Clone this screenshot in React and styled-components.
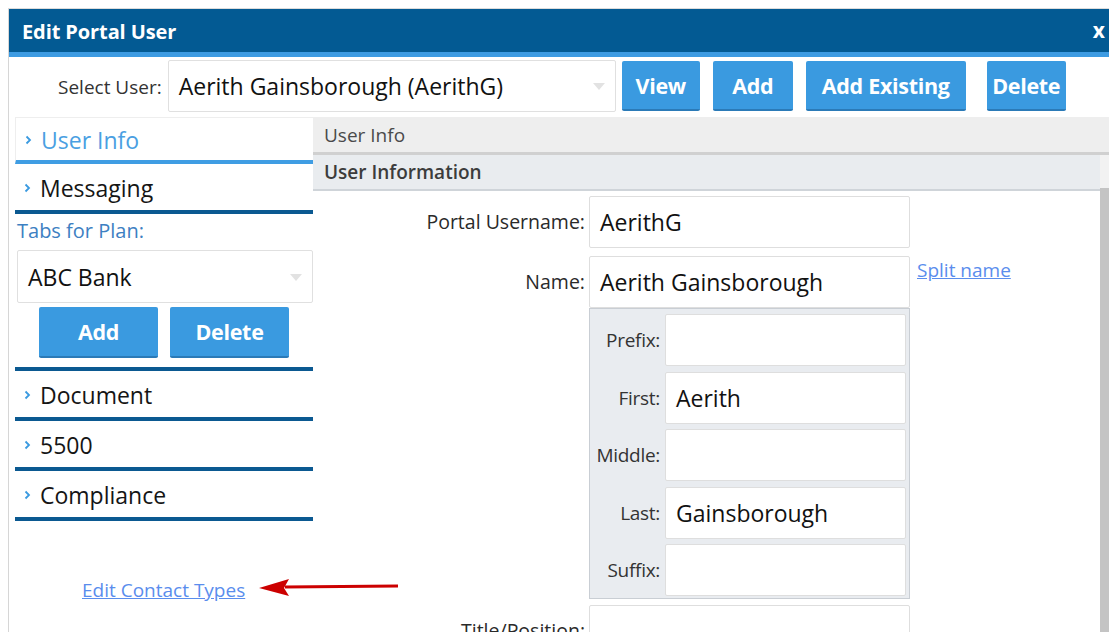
import React from 'react';
import styled, { createGlobalStyle } from 'styled-components';

const GlobalStyle = createGlobalStyle`
  html, body {
    margin: 0;
    padding: 0;
    background: #ffffff;
    overflow: hidden;
  }
  body {
    font-family: "Open Sans", "Noto Sans", Arial, sans-serif;
    color: #1a1a1a;
  }
`;

const Dialog = styled.div`
  margin: 8px 0 0 8px;
  height: calc(100vh - 8px);
  border-top: 1px solid #dcdcdc;
  border-left: 1px solid #d6d6d6;
  background: #fff;
  overflow: hidden;
  display: flex;
  flex-direction: column;
`;

const TitleBar = styled.div`
  height: 43px;
  flex: none;
  display: flex;
  align-items: center;
  justify-content: space-between;
  padding: 0 4px 0 13px;
  background: #035a93;
  border-bottom: 5px solid #3d9be2;
  color: #fff;
`;

const Title = styled.h2`
  margin: 0;
  font-size: 20px;
  font-weight: 700;
  letter-spacing: -0.1px;
  padding-top: 2px;
`;

const Close = styled.span`
  font-size: 21px;
  font-weight: 700;
  line-height: 1;
`;

const Toolbar = styled.div`
  height: 60px;
  flex: none;
  display: flex;
  align-items: flex-start;
  padding: 3px 0 0 49px;
  box-sizing: border-box;
`;

const FieldLabel = styled.label`
  font-size: 19px;
  color: #333;
  white-space: nowrap;
  align-self: center;
  margin-top: -3px;
`;

const SelectBox = styled.div`
  position: relative;
  width: ${(p) => p.$width}px;
  height: ${(p) => p.$height || 52}px;
  flex: none;
  box-sizing: border-box;
  border: 1px solid #e0e0e0;
  border-radius: 2px;
  background: #fff;
  display: flex;
  align-items: center;
  padding-left: 10px;
  font-size: 23px;
  color: #111;
  margin-left: ${(p) => p.$offset || 0}px;

  &::after {
    content: '';
    position: absolute;
    right: 10px;
    top: 50%;
    margin-top: -3px;
    border-left: 6px solid transparent;
    border-right: 6px solid transparent;
    border-top: 7px solid #e2e2e2;
  }
`;

const Button = styled.button`
  height: ${(p) => p.$height || 50}px;
  width: ${(p) => p.$width}px;
  flex: none;
  margin-left: ${(p) => p.$gap || 0}px;
  margin-top: 1px;
  padding: 0;
  border: none;
  border-bottom: 2px solid #2b7ab7;
  border-radius: 2px;
  background: #3a9ae0;
  color: #fff;
  font-family: inherit;
  font-size: 21.5px;
  font-weight: 700;
  letter-spacing: -0.3px;
  cursor: pointer;
`;

const Main = styled.div`
  flex: 1;
  display: flex;
  min-height: 0;
`;

const Sidebar = styled.aside`
  width: 298px;
  flex: none;
  margin-left: 6px;
  display: flex;
  flex-direction: column;
  position: relative;
  z-index: 1;
`;

/* sidebar section tab: active one is light blue, others black with a dark rule */
const Tab = styled.div`
  height: ${(p) => (p.$active ? 47 : 50)}px;
  flex: none;
  box-sizing: border-box;
  display: flex;
  align-items: center;
  gap: 9px;
  padding: 2px 0 0 9px;
  font-size: 23px;
  color: ${(p) => (p.$active ? '#4a9fe2' : '#151515')};
  border-bottom: 4px solid ${(p) => (p.$active ? '#3f9de3' : '#0b5991')};
  border-top: ${(p) => (p.$active ? '1px solid #eeeeee' : 'none')};
  border-left: ${(p) => (p.$active ? '1px solid #eeeeee' : 'none')};
`;

const Chevron = () => (
  <svg width="7" height="10" viewBox="0 0 7 10">
    <path d="M1.5 1.5 L5 5 L1.5 8.5" fill="none" stroke="#3a9ae0" strokeWidth="1.8" />
  </svg>
);

const PlanBlock = styled.div`
  display: flex;
  flex-direction: column;
  padding-top: 5px;
  border-bottom: 4px solid #0b5991;
  padding-bottom: 9px;
`;

const PlanLabel = styled.div`
  font-size: 20px;
  color: #3d80c2;
  padding-left: 2px;
  height: 31px;
  line-height: 23px;
`;

const PlanButtons = styled.div`
  display: flex;
  gap: 12px;
  padding-left: 24px;
  margin-top: 3px;
`;

const LinkRow = styled.div`
  display: flex;
  align-items: center;
  padding-left: 67px;
  margin-top: 56px;
`;

const Link = styled.a`
  font-size: 19px;
  color: #5a8ded;
  text-decoration: underline;
  cursor: pointer;
  white-space: nowrap;
`;

const Arrow = styled.svg`
  flex: none;
  margin-left: 14px;
  margin-top: -7px;
`;

const Content = styled.section`
  flex: 1;
  display: flex;
  flex-direction: column;
  min-width: 0;
`;

const SectionBar = styled.div`
  height: ${(p) => p.$height}px;
  flex: none;
  display: flex;
  align-items: center;
  padding-left: 11px;
  font-size: ${(p) => p.$size}px;
  font-weight: ${(p) => p.$weight || 400};
  color: ${(p) => p.$color};
  background: ${(p) => p.$bg};
  border-bottom: ${(p) => p.$line};
`;

const Scroller = styled.div`
  flex: 1;
  display: flex;
  min-height: 0;
`;

const ScrollBody = styled.div`
  flex: 1;
  display: flex;
  flex-direction: column;
`;

const ScrollTrack = styled.div`
  width: 9px;
  flex: none;
  background: #f2f2f2;
  display: flex;
  justify-content: flex-end;
  padding-top: 33px;
`;

const ScrollThumb = styled.div`
  width: 5px;
  flex: 1;
  background: #c4c4c4;
`;

const Form = styled.div`
  display: flex;
  flex-direction: column;
  padding-top: 5px;
`;

const Row = styled.div`
  display: flex;
  align-items: flex-start;
  margin-bottom: ${(p) => p.$after || 0}px;
`;

const RowLabel = styled.div`
  width: 276px;
  flex: none;
  height: 52px;
  line-height: 52px;
  text-align: right;
  padding-right: 4px;
  box-sizing: border-box;
  font-size: 19.5px;
  color: #2a2a2a;
  white-space: nowrap;
`;

const Input = styled.div`
  width: ${(p) => p.$width}px;
  height: 52px;
  flex: none;
  box-sizing: border-box;
  border: 1px solid #dedede;
  border-radius: 2px;
  background: #fff;
  padding-left: 10px;
  display: flex;
  align-items: center;
  font-size: 23px;
  color: #111;
`;

const SideLink = styled(Link)`
  margin: 1px 0 0 7px;
`;

const NamePanel = styled.div`
  margin-left: 276px;
  width: 321px;
  box-sizing: border-box;
  background: #e9ecf0;
  border: 1px solid #c9ced4;
  padding: 5px 4px 2px 0;
  display: flex;
  flex-direction: column;
  gap: 5.5px;
  margin-bottom: 6px;
`;

const PartRow = styled.div`
  display: flex;
  align-items: center;
`;

const PartLabel = styled.div`
  width: 75px;
  flex: none;
  text-align: right;
  font-size: 19px;
  letter-spacing: -0.3px;
  color: #333;
  padding-right: 5px;
  box-sizing: border-box;
`;

const nameParts = [
  { label: 'Prefix:', value: '' },
  { label: 'First:', value: 'Aerith' },
  { label: 'Middle:', value: '' },
  { label: 'Last:', value: 'Gainsborough' },
  { label: 'Suffix:', value: '' },
];

const lowerTabs = ['Document', '5500', 'Compliance'];

const App = () => {
  return (
    <>
      <GlobalStyle />
      <Dialog>
        <TitleBar>
          <Title>Edit Portal User</Title>
          <Close>x</Close>
        </TitleBar>

        <Toolbar>
          <FieldLabel>Select User:</FieldLabel>
          <SelectBox $width={448} $offset={6}>Aerith Gainsborough (AerithG)</SelectBox>
          <Button $width={78} $gap={6}>View</Button>
          <Button $width={80} $gap={13}>Add</Button>
          <Button $width={160} $gap={13}>Add Existing</Button>
          <Button $width={79} $gap={21}>Delete</Button>
        </Toolbar>

        <Main>
          <Sidebar>
            <Tab $active>
              <Chevron />
              User Info
            </Tab>
            <Tab>
              <Chevron />
              Messaging
            </Tab>

            <PlanBlock>
              <PlanLabel>Tabs for Plan:</PlanLabel>
              <SelectBox $width={296} $height={53} $offset={2}>ABC Bank</SelectBox>
              <PlanButtons>
                <Button $width={119} $height={51}>Add</Button>
                <Button $width={119} $height={51}>Delete</Button>
              </PlanButtons>
            </PlanBlock>

            {lowerTabs.map((t) => (
              <Tab key={t}>
                <Chevron />
                {t}
              </Tab>
            ))}

            <LinkRow>
              <Link>Edit Contact Types</Link>
              <Arrow width="140" height="20" viewBox="0 0 140 20">
                <line x1="26" y1="10" x2="139" y2="9" stroke="#cc0000" strokeWidth="3" />
                <path d="M0 11 L30 2 L25 11 L30 19 Z" fill="#cc0000" />
              </Arrow>
            </LinkRow>
          </Sidebar>

          <Content>
            <SectionBar $height={35} $size={19} $bg="#eeeeee" $color="#4a4a4a" $line="3px solid #d0d0d0">
              User Info
            </SectionBar>
            <Scroller>
              <ScrollBody>
                <SectionBar
                  $height={34}
                  $size={19}
                  $bg="#e9ecef"
                  $color="#3c3c3c"
                  $weight={600}
                  $line="2px solid #cfd4d9"
                >
                  User Information
                </SectionBar>
                <Form>
                  <Row $after={8}>
                    <RowLabel>Portal Username:</RowLabel>
                    <Input $width={321}>AerithG</Input>
                  </Row>
                  <Row>
                    <RowLabel>Name:</RowLabel>
                    <Input $width={321}>Aerith Gainsborough</Input>
                    <SideLink>Split name</SideLink>
                  </Row>
                  <NamePanel>
                    {nameParts.map((p) => (
                      <PartRow key={p.label}>
                        <PartLabel>{p.label}</PartLabel>
                        <Input $width={241}>{p.value}</Input>
                      </PartRow>
                    ))}
                  </NamePanel>
                  <Row>
                    <RowLabel>Title/Position:</RowLabel>
                    <Input $width={321} />
                  </Row>
                </Form>
              </ScrollBody>
              <ScrollTrack>
                <ScrollThumb />
              </ScrollTrack>
            </Scroller>
          </Content>
        </Main>
      </Dialog>
    </>
  );
};

export default App;
